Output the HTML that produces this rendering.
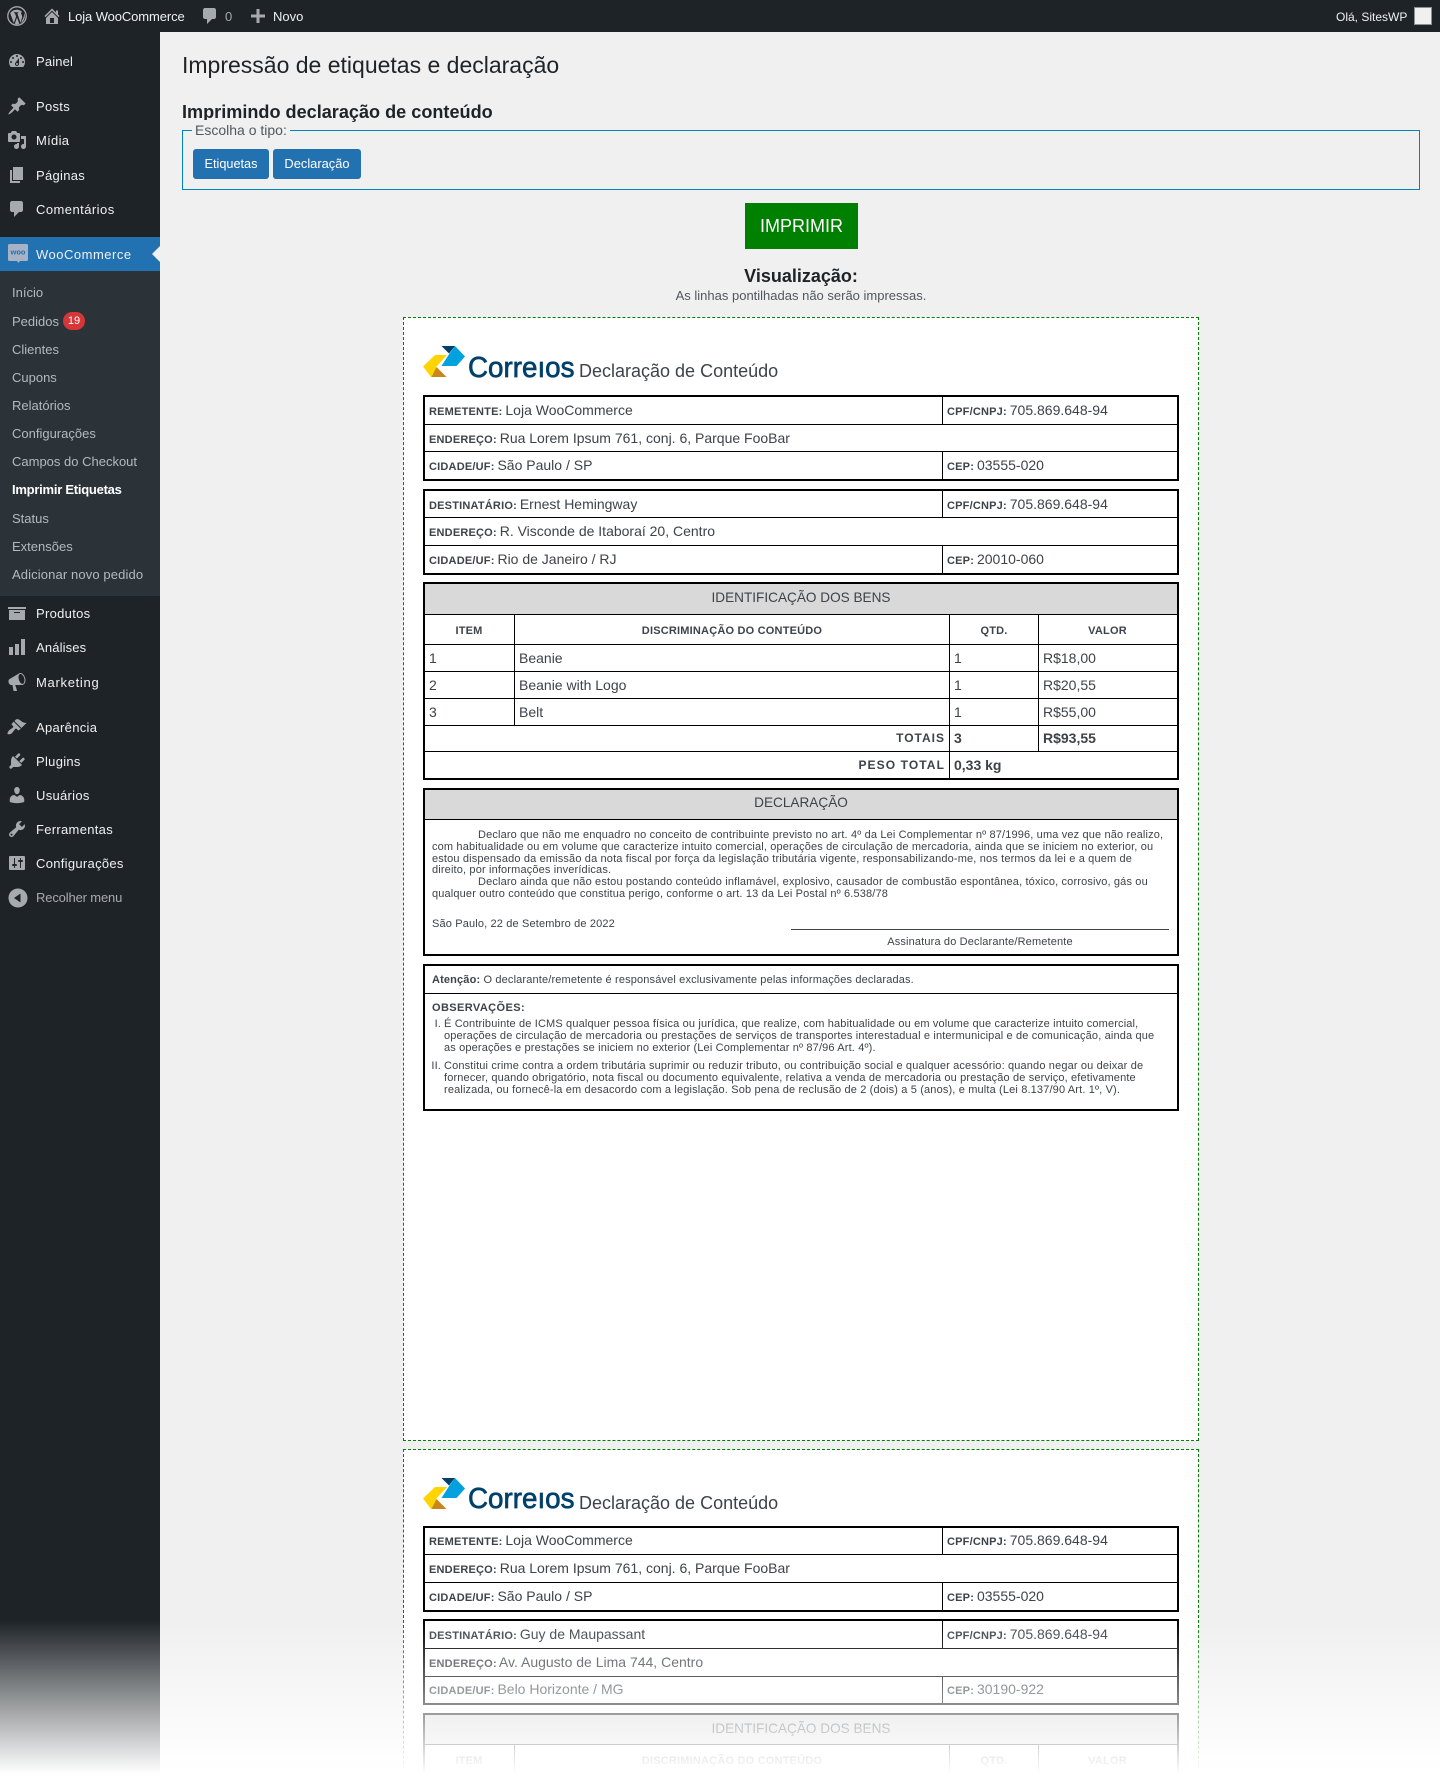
<!DOCTYPE html>
<html lang="pt-BR"><head><meta charset="utf-8"><title>Impressão de etiquetas</title>
<style>
*{box-sizing:border-box}
html,body{margin:0;padding:0;width:1440px;height:1780px;overflow:hidden}
body{background:#f0f0f1;font-family:"Liberation Sans",sans-serif;color:#3c434a}
#w{position:absolute;left:0;top:0;width:1440px;height:1780px;overflow:hidden;background:#f0f0f1}
.a{position:absolute}
.t{position:absolute;white-space:nowrap;line-height:20px;font-size:14px;color:#3c434a}
.c{transform:translateX(-50%)}
.r{transform:translateX(-100%)}
b.k{font-size:11px;letter-spacing:.2px;margin-right:-1px}
.m{position:absolute;left:36px;margin-top:1px;white-space:nowrap;line-height:20px;font-size:13px;letter-spacing:.3px;color:#f0f0f1}
.s{position:absolute;left:12px;margin-top:1px;white-space:nowrap;line-height:20px;font-size:13px;letter-spacing:0;color:#b4b9be}
svg.i{position:absolute;left:7px;width:20px;height:20px;fill:#a7aaad}
.bx{position:absolute;left:423px;width:756px;border:2px solid #000}
.h{position:absolute;height:1px;background:#000}
.v{position:absolute;width:1px;background:#000}
.g{position:absolute;background:#d9d9d9}
.d{position:absolute;margin-top:1px;white-space:nowrap;font-size:11px;line-height:12px;color:#3c434a;letter-spacing:.15px}
.pg{position:absolute;left:403px;width:796px;background:#fff;border:1px dashed #008000}
.hd{font-size:18px;color:#3c434a}
.th{font-size:11px;font-weight:bold;letter-spacing:.2px;margin-top:1px}
.ti{font-size:13.6px}
</style></head><body><div id="w">

<!-- admin bar -->
<div class="a" style="left:0;top:0;width:1440px;height:32px;background:#1d2327"></div>
<svg class="a" style="left:7px;top:6px;width:20px;height:20px" viewBox="0 0 20 20"><circle cx="10" cy="10" r="9.2" fill="none" stroke="#a7aaad" stroke-width="1.3"/><path fill="#a7aaad" d="M3.2 7.2l3.6 9.9 2.3-6.6-1.2-3.2-1-.1v-.9h4.4v.9l-1 .1 3.2 9.4 1.5-5c.5-1.700-.3-2.800-.8-3.700-.5-.9.1-1.900 1-2A7.700 7.700 0 0 0 3.200 7.200zM10 11.500l-2.300 6.600a8 8 0 0 0 4.700-.1zM16.900 6.500c.6 2.600-.1 4-.6 5.500l-2.400 5A7.900 7.900 0 0 0 16.900 6.500z"/></svg>
<svg class="a" style="left:42px;top:6px;width:20px;height:20px;fill:#a7aaad" viewBox="0 0 20 20"><path d="M16 8.500l1.530 1.530-1.060 1.060L10 4.620l-6.470 6.470-1.060-1.060L10 2.500l4 4v-2h2v4zm-6-2.460l6 5.990V18H4v-5.970zM12 17v-5H8v5h4z"/></svg>
<div class="t" style="left:68px;top:7px;font-size:13px;color:#f0f0f1;letter-spacing:-.1px">Loja WooCommerce</div>
<svg class="a" style="left:200px;top:6px;width:20px;height:20px;fill:#a7aaad" viewBox="0 0 20 20"><path d="M5 2h9c1.100 0 2 .9 2 2v7c0 1.100-.9 2-2 2h-2l-5 5v-5H5c-1.100 0-2-.9-2-2V4c0-1.100.9-2 2-2z"/></svg>
<div class="t" style="left:225px;top:7px;font-size:13px;color:#a7aaad">0</div>
<svg class="a" style="left:248px;top:6px;width:20px;height:20px;fill:#a7aaad" viewBox="0 0 20 20"><path d="M17 8.500v3h-5.500V17h-3v-5.500H3v-3h5.500V3h3v5.500z"/></svg>
<div class="t" style="left:273px;top:7px;font-size:13px;color:#f0f0f1">Novo</div>
<div class="t" style="left:1336px;top:7px;font-size:12px;color:#f0f0f1">Olá, SitesWP</div>
<div class="a" style="left:1414px;top:7px;width:18px;height:18px;background:#f0f0f1;border:1px solid #8c8f94"></div>

<!-- sidebar -->
<div class="a" style="left:0;top:32px;width:160px;height:1748px;background:#1d2327"></div>
<div class="a" style="left:0;top:271px;width:160px;height:325px;background:#2c3338"></div>
<div class="a" style="left:0;top:237px;width:160px;height:34px;background:#2271b1"></div>
<div class="a" style="left:152px;top:246px;width:0;height:0;border:8px solid transparent;border-right-color:#f0f0f1;border-left:0"></div>

<svg class="i" style="top:51px" viewBox="0 0 20 20"><path d="M3.760 16h12.480c1.100-1.370 1.760-3.110 1.760-5 0-4.420-3.580-8-8-8s-8 3.580-8 8c0 1.890.66 3.630 1.760 5zM10 4c.55 0 1 .45 1 1s-.45 1-1 1-1-.45-1-1 .45-1 1-1zM6 6c.55 0 1 .45 1 1s-.45 1-1 1-1-.45-1-1 .45-1 1-1zm8 0c.55 0 1 .45 1 1s-.45 1-1 1-1-.45-1-1 .45-1 1-1zm-5.370 5.550L12 7v6c0 1.100-.9 2-2 2s-2-.9-2-2c0-.57.24-1.080.63-1.450zM4 10c.55 0 1 .45 1 1s-.45 1-1 1-1-.45-1-1 .45-1 1-1zm12 0c.55 0 1 .45 1 1s-.45 1-1 1-1-.45-1-1 .45-1 1-1zm-5 3c0-.55-.45-1-1-1s-1 .45-1 1 .45 1 1 1 1-.45 1-1z" fill-rule="evenodd"/></svg>
<div class="m" style="top:51px;letter-spacing:.15px">Painel</div>
<svg class="i" style="top:96px" viewBox="0 0 20 20"><path d="M10.440 3.020l1.820-1.820 6.360 6.350-1.830 1.820c-1.050-.68-2.480-.57-3.410.36l-.75.75c-.92.93-1.040 2.350-.35 3.410l-1.830 1.820-2.410-2.410-2.800 2.790c-.42.42-3.380 2.710-3.800 2.290s1.860-3.390 2.280-3.810l2.790-2.790L4.100 9.360l1.830-1.820c1.050.69 2.480.57 3.400-.36l.75-.75c.93-.92 1.050-2.350.36-3.410z"/></svg>
<div class="m" style="top:96px">Posts</div>
<svg class="i" style="top:130px" viewBox="0 0 20 20"><path fill-rule="evenodd" d="M13 11V4c0-.55-.45-1-1-1h-1.670L9 1H5L3.670 3H2c-.55 0-1 .45-1 1v7c0 .55.45 1 1 1h10c.55 0 1-.45 1-1zM7 4.500c1.380 0 2.500 1.120 2.500 2.500S8.380 9.500 7 9.500 4.500 8.380 4.500 7 5.620 4.500 7 4.500zM14 6h5v10.500c0 1.380-1.120 2.500-2.500 2.500S14 17.880 14 16.500s1.120-2.500 2.500-2.500c.17 0 .34.02.5.05V9h-3V6zm-4 8.050V13h2v3.500c0 1.380-1.120 2.500-2.500 2.500S7 17.880 7 16.500 8.120 14 9.500 14c.17 0 .34.02.5.05z"/></svg>
<div class="m" style="top:130px">Mídia</div>
<svg class="i" style="top:165px" viewBox="0 0 20 20"><path d="M6 15V2h10v13H6zm-1 1h8v2H3V5h2v11z"/></svg>
<div class="m" style="top:165px">Páginas</div>
<svg class="i" style="top:199px" viewBox="0 0 20 20"><path d="M5 2h9c1.100 0 2 .9 2 2v7c0 1.100-.9 2-2 2h-2l-5 5v-5H5c-1.100 0-2-.9-2-2V4c0-1.100.9-2 2-2z"/></svg>
<div class="m" style="top:199px;letter-spacing:.45px">Comentários</div>
<svg class="a" style="left:8px;top:244px;width:20px;height:20px" viewBox="0 0 20 20"><path fill="#a7b3c4" d="M1.500 0h17A1.500 1.500 0 0 1 20 1.500v14a1.500 1.500 0 0 1-1.500 1.500H12l-1.500 2-1.500-2H1.500A1.500 1.500 0 0 1 0 15.500v-14A1.500 1.500 0 0 1 1.500 0z"/><text x="10" y="10.500" text-anchor="middle" font-size="7.500" font-weight="bold" fill="#2271b1" font-family="Liberation Sans,sans-serif">woo</text></svg>
<div class="m" style="top:244px;letter-spacing:.5px">WooCommerce</div>

<div class="s" style="top:282px">Início</div>
<div class="s" style="top:311px">Pedidos</div>
<div class="a" style="left:63px;top:312px;width:22px;height:18px;border-radius:9px;background:#d63638;color:#fff;font-size:11px;line-height:18px;text-align:center">19</div>
<div class="s" style="top:339px">Clientes</div>
<div class="s" style="top:367px">Cupons</div>
<div class="s" style="top:395px">Relatórios</div>
<div class="s" style="top:423px">Configurações</div>
<div class="s" style="top:451px">Campos do Checkout</div>
<div class="s" style="top:479px;color:#fff;font-weight:bold;letter-spacing:-.25px">Imprimir Etiquetas</div>
<div class="s" style="top:508px">Status</div>
<div class="s" style="top:536px">Extensões</div>
<div class="s" style="top:564px;letter-spacing:.12px">Adicionar novo pedido</div>

<svg class="i" style="top:603px" viewBox="0 0 20 20"><path fill-rule="evenodd" d="M19 4v2H1V4h18zM2 7h16v10H2V7zm11 3V9H7v1h6z"/></svg>
<div class="m" style="top:603px">Produtos</div>
<svg class="i" style="top:637px" viewBox="0 0 20 20"><path d="M18 18V2h-4v16h4zm-6 0V7H8v11h4zm-6 0v-8H2v8h4z"/></svg>
<div class="m" style="top:637px;letter-spacing:.15px">Análises</div>
<svg class="i" style="top:672px" viewBox="0 0 20 20"><path fill-rule="evenodd" d="M18.150 5.940c.46 1.620.38 3.220-.02 4.480-.42 1.280-1.260 2.180-2.300 2.480-.4.12-.6.1-.8.1H8.200l1.800 5.500c.02.14-.06.26-.14.34-.08.1-.24.16-.34.16H6.950c-.1 0-.26-.06-.34-.16-.08-.08-.16-.2-.14-.34l-1-5.500H4.250c-.5.06-1.080-.18-1.540-.62s-.88-1.080-1.060-1.880c-.24-.8-.2-1.560-.02-2.200.18-.62.58-1.080 1.060-1.300l9-5.400c.34-.22.6-.36 1-.46 1.040-.3 2.240.1 3.220.98.98.88 1.800 2.240 2.260 3.860zM15.570 11.920c.4-.1.740-.34 1.040-.7.58-.7.860-1.760.860-3.040 0-.64-.1-1.300-.28-1.980-.34-1.360-1.020-2.500-1.780-3.240-.76-.76-1.500-1.100-2.300-.9-.78.22-1.320 1-1.520 2.120-.14.62-.14 1.340-.02 2.080.4 2.800 2.200 5.800 4 5.660z"/></svg>
<div class="m" style="top:672px;letter-spacing:.7px">Marketing</div>
<svg class="i" style="top:717px" viewBox="0 0 20 20"><path d="M14.480 11.060L7.410 3.990l1.500-1.500c.5-.56 2.300-.47 3.510.32 1.210.8 1.430 1.280 2.910 2.100 1.180.64 2.450 1.260 4.450.85zm-.71.71L6.700 4.700 4.930 6.470c-.39.39-.39 1.020 0 1.410l1.060 1.060c.39.39.39 1.030 0 1.420-.6.6-1.430 1.110-2.210 1.690-.35.26-.7.53-1.010.84C1.430 13.230.25 16.500.5 17c.3.500 3 .5 4.300-.8.66-.66 1.220-1.380 1.750-2.090.57-.77 1.110-1.520 1.730-2.140.39-.39 1.020-.39 1.410 0l1.060 1.060c.39.39 1.020.39 1.410 0z"/></svg>
<div class="m" style="top:717px">Aparência</div>
<svg class="i" style="top:751px" viewBox="0 0 20 20"><path d="M13.110 4.360L9.870 7.600 8 5.730l3.240-3.240c.35-.34 1.050-.2 1.560.32.52.51.66 1.210.31 1.550zm-8 1.770l.91-1.120 9.010 9.010-1.190.84c-.71.71-2.630 1.160-3.820 1.160H6.140L4.900 17.260c-.59.59-1.540.59-2.120 0-.59-.58-.59-1.530 0-2.120l1.240-1.240v-3.880c0-1.130.4-3.190 1.090-3.890zm7.260 3.970l3.240-3.240c.34-.35 1.040-.21 1.550.31.52.51.66 1.210.31 1.550l-3.240 3.250z"/></svg>
<div class="m" style="top:751px">Plugins</div>
<svg class="i" style="top:785px" viewBox="0 0 20 20"><path d="M10 9.250c-2.270 0-2.730-3.440-2.730-3.440C7 4.020 7.820 2 9.970 2c2.160 0 2.980 2.020 2.710 3.810 0 0-.41 3.440-2.680 3.440zm0 2.570L12.720 10c2.390 0 4.520 2.330 4.520 4.530v2.490s-3.650 1.130-7.240 1.130c-3.650 0-7.240-1.130-7.240-1.130v-2.490c0-2.250 1.940-4.480 4.470-4.480z"/></svg>
<div class="m" style="top:785px">Usuários</div>
<svg class="i" style="top:819px" viewBox="0 0 20 20"><path fill-rule="evenodd" d="M16.680 9.770c-1.340 1.340-3.300 1.670-4.950.99l-5.410 6.520c-.99.99-2.590.99-3.580 0s-.99-2.590 0-3.570l6.520-5.420c-.68-1.650-.35-3.610.99-4.950 1.280-1.280 3.120-1.620 4.720-1.060l-2.890 2.890 2.820 2.820 2.860-2.870c.53 1.580.18 3.390-1.080 4.650zM3.810 16.210c.4.39 1.040.39 1.430 0 .4-.4.4-1.040 0-1.430-.39-.4-1.030-.4-1.430 0-.39.39-.39 1.030 0 1.430z"/></svg>
<div class="m" style="top:819px">Ferramentas</div>
<svg class="i" style="top:853px" viewBox="0 0 20 20"><path fill-rule="evenodd" d="M18 16V4c0-.55-.45-1-1-1H3c-.55 0-1 .45-1 1v12c0 .55.45 1 1 1h14c.55 0 1-.45 1-1zM8 11h1c.55 0 1 .45 1 1s-.45 1-1 1H8v1.500c0 .28-.22.5-.5.5s-.5-.22-.5-.5V13H6c-.55 0-1-.45-1-1s.45-1 1-1h1V5.500c0-.28.22-.5.5-.5s.5.22.5.5V11zm5-2h-1c-.55 0-1-.45-1-1s.45-1 1-1h1V5.500c0-.28.22-.5.5-.5s.5.22.5.5V7h1c.55 0 1 .45 1 1s-.45 1-1 1h-1v5.500c0 .28-.22.5-.5.5s-.5-.22-.5-.5V9z"/></svg>
<div class="m" style="top:853px">Configurações</div>
<svg class="i" style="top:888px;left:8px" viewBox="0 0 20 20"><path fill-rule="evenodd" d="M10 .5c5.250 0 9.500 4.250 9.500 9.500s-4.250 9.500-9.500 9.500S.5 15.250.5 10 4.750.5 10 .5zM12.500 5.500L6 10l6.500 4.500z"/></svg>
<div class="m" style="top:887px;color:#a7aaad;letter-spacing:-.15px">Recolher menu</div>

<!-- content head -->
<div class="t" style="left:182px;top:53px;line-height:24px;font-size:23px;color:#1d2327">Impressão de etiquetas e declaração</div>
<div class="t" style="left:182px;top:102px;line-height:20px;font-size:18.1px;font-weight:bold;color:#1d2327">Imprimindo declaração de conteúdo</div>
<div class="a" style="left:182px;top:130px;width:1238px;height:60px;border:1px solid #0085ba"></div>
<div class="t" style="left:192px;top:120px;padding:0 3px;background:#f0f0f1;font-size:14px;color:#50575e">Escolha o tipo:</div>
<div class="a" style="left:193px;top:149px;width:76px;height:30px;background:#2271b1;border-radius:3px;color:#fff;font-size:12.7px;line-height:30px;text-align:center">Etiquetas</div>
<div class="a" style="left:273px;top:149px;width:88px;height:30px;background:#2271b1;border-radius:3px;color:#fff;font-size:12.9px;line-height:30px;text-align:center">Declaração</div>
<div class="a" style="left:745px;top:203px;width:113px;height:46px;background:#008000;color:#fff;font-size:18px;line-height:46px;text-align:center">IMPRIMIR</div>
<div class="t c" style="left:801px;top:266px;font-size:18px;font-weight:bold;color:#1d2327">Visualização:</div>
<div class="t c" style="left:801px;top:286px;font-size:13px;color:#50575e">As linhas pontilhadas não serão impressas.</div>

<!-- PAGE 1 -->
<div class="pg" style="top:317px;height:1124px"></div>
<svg class="a" style="left:420px;top:340px;width:60px;height:40px" viewBox="420 340 60 40"><path fill="#00416b" d="M441.500 346H455l-6 7.500z"/><path fill="#00a1de" d="M455 346l10 10.500-8.500 9.500h-15l8-12.500z"/><path fill="#ffd400" d="M423 366.500l12-11.500h12l-11 12 .5 10h-5.500z"/><path fill="#c8861c" d="M436.500 367l10 10h-15z"/></svg>
<svg class="a" style="left:460px;top:345px;width:120px;height:40px" viewBox="460 345 120 40"><text x="468" y="377" font-size="29" textLength="106.500" lengthAdjust="spacingAndGlyphs" fill="#00416b" stroke="#00416b" stroke-width=".7" font-family="Liberation Sans,sans-serif">Correıos</text></svg>
<div class="t hd" style="left:579px;top:361px">Declaração de Conteúdo</div>

<div class="bx" style="top:395px;height:86px"></div>
<div class="h" style="left:425px;width:752px;top:424px"></div>
<div class="h" style="left:425px;width:752px;top:451px"></div>
<div class="v" style="left:942px;top:397px;height:27px"></div>
<div class="v" style="left:942px;top:451px;height:28px"></div>
<div class="t" style="left:429px;top:400px"><b class="k">REMETENTE:</b> Loja WooCommerce</div>
<div class="t" style="left:947px;top:400px"><b class="k">CPF/CNPJ:</b> 705.869.648-94</div>
<div class="t" style="left:429px;top:428px"><b class="k">ENDEREÇO:</b> Rua Lorem Ipsum 761, conj. 6, Parque FooBar</div>
<div class="t" style="left:429px;top:455px"><b class="k">CIDADE/UF:</b> São Paulo / SP</div>
<div class="t" style="left:947px;top:455px"><b class="k">CEP:</b> 03555-020</div>

<div class="bx" style="top:489px;height:86px"></div>
<div class="h" style="left:425px;width:752px;top:517px"></div>
<div class="h" style="left:425px;width:752px;top:545px"></div>
<div class="v" style="left:942px;top:491px;height:26px"></div>
<div class="v" style="left:942px;top:545px;height:28px"></div>
<div class="t" style="left:429px;top:494px"><b class="k">DESTINATÁRIO:</b> Ernest Hemingway</div>
<div class="t" style="left:947px;top:494px"><b class="k">CPF/CNPJ:</b> 705.869.648-94</div>
<div class="t" style="left:429px;top:521px"><b class="k">ENDEREÇO:</b> R. Visconde de Itaboraí 20, Centro</div>
<div class="t" style="left:429px;top:549px"><b class="k">CIDADE/UF:</b> Rio de Janeiro / RJ</div>
<div class="t" style="left:947px;top:549px"><b class="k">CEP:</b> 20010-060</div>

<div class="g" style="left:425px;top:584px;width:752px;height:30px"></div>
<div class="bx" style="top:582px;height:198px"></div>
<div class="h" style="left:425px;width:752px;top:614px"></div>
<div class="h" style="left:425px;width:752px;top:644px"></div>
<div class="h" style="left:425px;width:752px;top:671px"></div>
<div class="h" style="left:425px;width:752px;top:698px"></div>
<div class="h" style="left:425px;width:752px;top:725px"></div>
<div class="h" style="left:425px;width:752px;top:751px"></div>
<div class="v" style="left:514px;top:614px;height:111px"></div>
<div class="v" style="left:949px;top:614px;height:164px"></div>
<div class="v" style="left:1038px;top:614px;height:137px"></div>
<div class="t c ti" style="left:801px;top:588px">IDENTIFICAÇÃO DOS BENS</div>
<div class="t c th" style="left:469px;top:620px">ITEM</div>
<div class="t c th" style="left:732px;top:620px">DISCRIMINAÇÃO DO CONTEÚDO</div>
<div class="t c th" style="left:994px;top:620px">QTD.</div>
<div class="t c th" style="left:1107.500px;top:620px">VALOR</div>
<div class="t" style="left:429px;top:648px">1</div><div class="t" style="left:519px;top:648px">Beanie</div><div class="t" style="left:954px;top:648px">1</div><div class="t" style="left:1043px;top:648px">R$18,00</div>
<div class="t" style="left:429px;top:675px">2</div><div class="t" style="left:519px;top:675px">Beanie with Logo</div><div class="t" style="left:954px;top:675px">1</div><div class="t" style="left:1043px;top:675px">R$20,55</div>
<div class="t" style="left:429px;top:702px">3</div><div class="t" style="left:519px;top:702px">Belt</div><div class="t" style="left:954px;top:702px">1</div><div class="t" style="left:1043px;top:702px">R$55,00</div>
<div class="t r" style="left:945px;top:728px;font-size:12px;font-weight:bold;letter-spacing:1px">TOTAIS</div><div class="t" style="left:954px;top:728px;font-weight:bold">3</div><div class="t" style="left:1043px;top:728px;font-weight:bold">R$93,55</div>
<div class="t r" style="left:945px;top:755px;font-size:12px;font-weight:bold;letter-spacing:1.1px">PESO TOTAL</div><div class="t" style="left:954px;top:755px;font-weight:bold">0,33 kg</div>

<div class="g" style="left:425px;top:790px;width:752px;height:29px"></div>
<div class="bx" style="top:788px;height:168px"></div>
<div class="h" style="left:425px;width:752px;top:819px"></div>
<div class="t c ti" style="left:801px;top:793px">DECLARAÇÃO</div>
<div class="d" style="left:478px;top:828px">Declaro que não me enquadro no conceito de contribuinte previsto no art. 4º da Lei Complementar nº 87/1996, uma vez que não realizo,</div>
<div class="d" style="left:432px;top:840px">com habitualidade ou em volume que caracterize intuito comercial, operações de circulação de mercadoria, ainda que se iniciem no exterior, ou</div>
<div class="d" style="left:432px;top:852px">estou dispensado da emissão da nota fiscal por força da legislação tributária vigente, responsabilizando-me, nos termos da lei e a quem de</div>
<div class="d" style="left:432px;top:863px">direito, por informações inverídicas.</div>
<div class="d" style="left:478px;top:875px">Declaro ainda que não estou postando conteúdo inflamável, explosivo, causador de combustão espontânea, tóxico, corrosivo, gás ou</div>
<div class="d" style="left:432px;top:887px">qualquer outro conteúdo que constitua perigo, conforme o art. 13 da Lei Postal nº 6.538/78</div>
<div class="d" style="left:432px;top:917px">São Paulo, 22 de Setembro de 2022</div>
<div class="h" style="left:791px;width:378px;top:929px;background:#3c434a"></div>
<div class="d c" style="left:980px;top:935px">Assinatura do Declarante/Remetente</div>

<div class="bx" style="top:964px;height:147px"></div>
<div class="h" style="left:425px;width:752px;top:993px"></div>
<div class="d" style="left:432px;top:973px"><b>Atenção:</b> O declarante/remetente é responsável exclusivamente pelas informações declaradas.</div>
<div class="d" style="left:432px;top:1001px;font-weight:bold;letter-spacing:.4px">OBSERVAÇÕES:</div>
<div class="d r" style="left:441px;top:1017px">I.</div>
<div class="d" style="left:444px;top:1017px">É Contribuinte de ICMS qualquer pessoa física ou jurídica, que realize, com habitualidade ou em volume que caracterize intuito comercial,</div>
<div class="d" style="left:444px;top:1029px">operações de circulação de mercadoria ou prestações de serviços de transportes interestadual e intermunicipal e de comunicação, ainda que</div>
<div class="d" style="left:444px;top:1041px">as operações e prestações se iniciem no exterior (Lei Complementar nº 87/96 Art. 4º).</div>
<div class="d r" style="left:441px;top:1059px">II.</div>
<div class="d" style="left:444px;top:1059px">Constitui crime contra a ordem tributária suprimir ou reduzir tributo, ou contribuição social e qualquer acessório: quando negar ou deixar de</div>
<div class="d" style="left:444px;top:1071px">fornecer, quando obrigatório, nota fiscal ou documento equivalente, relativa a venda de mercadoria ou prestação de serviço, efetivamente</div>
<div class="d" style="left:444px;top:1083px">realizada, ou fornecê-la em desacordo com a legislação. Sob pena de reclusão de 2 (dois) a 5 (anos), e multa (Lei 8.137/90 Art. 1º, V).</div>

<!-- PAGE 2 -->
<div class="pg" style="top:1449px;height:340px"></div>
<svg class="a" style="left:420px;top:1472px;width:60px;height:40px" viewBox="420 340 60 40"><path fill="#00416b" d="M441.500 346H455l-6 7.500z"/><path fill="#00a1de" d="M455 346l10 10.500-8.500 9.500h-15l8-12.500z"/><path fill="#ffd400" d="M423 366.500l12-11.500h12l-11 12 .5 10h-5.500z"/><path fill="#c8861c" d="M436.500 367l10 10h-15z"/></svg>
<svg class="a" style="left:460px;top:1476px;width:120px;height:40px" viewBox="460 345 120 40"><text x="468" y="377" font-size="29" textLength="106.500" lengthAdjust="spacingAndGlyphs" fill="#00416b" stroke="#00416b" stroke-width=".7" font-family="Liberation Sans,sans-serif">Correıos</text></svg>
<div class="t hd" style="left:579px;top:1493px">Declaração de Conteúdo</div>

<div class="bx" style="top:1526px;height:86px"></div>
<div class="h" style="left:425px;width:752px;top:1554px"></div>
<div class="h" style="left:425px;width:752px;top:1582px"></div>
<div class="v" style="left:942px;top:1528px;height:26px"></div>
<div class="v" style="left:942px;top:1582px;height:28px"></div>
<div class="t" style="left:429px;top:1530px"><b class="k">REMETENTE:</b> Loja WooCommerce</div>
<div class="t" style="left:947px;top:1530px"><b class="k">CPF/CNPJ:</b> 705.869.648-94</div>
<div class="t" style="left:429px;top:1558px"><b class="k">ENDEREÇO:</b> Rua Lorem Ipsum 761, conj. 6, Parque FooBar</div>
<div class="t" style="left:429px;top:1586px"><b class="k">CIDADE/UF:</b> São Paulo / SP</div>
<div class="t" style="left:947px;top:1586px"><b class="k">CEP:</b> 03555-020</div>

<div class="bx" style="top:1619px;height:86px"></div>
<div class="h" style="left:425px;width:752px;top:1648px"></div>
<div class="h" style="left:425px;width:752px;top:1676px"></div>
<div class="v" style="left:942px;top:1621px;height:27px"></div>
<div class="v" style="left:942px;top:1676px;height:27px"></div>
<div class="t" style="left:429px;top:1624px"><b class="k">DESTINATÁRIO:</b> Guy de Maupassant</div>
<div class="t" style="left:947px;top:1624px"><b class="k">CPF/CNPJ:</b> 705.869.648-94</div>
<div class="t" style="left:429px;top:1652px"><b class="k">ENDEREÇO:</b> Av. Augusto de Lima 744, Centro</div>
<div class="t" style="left:429px;top:1679px"><b class="k">CIDADE/UF:</b> Belo Horizonte / MG</div>
<div class="t" style="left:947px;top:1679px"><b class="k">CEP:</b> 30190-922</div>

<div class="g" style="left:425px;top:1715px;width:752px;height:29px"></div>
<div class="bx" style="top:1713px;height:67px;border-bottom:0"></div>
<div class="h" style="left:425px;width:752px;top:1744px"></div>
<div class="h" style="left:425px;width:752px;top:1775px"></div>
<div class="v" style="left:514px;top:1744px;height:36px"></div>
<div class="v" style="left:949px;top:1744px;height:36px"></div>
<div class="v" style="left:1038px;top:1744px;height:36px"></div>
<div class="t c ti" style="left:801px;top:1719px">IDENTIFICAÇÃO DOS BENS</div>
<div class="t c th" style="left:469px;top:1750px">ITEM</div>
<div class="t c th" style="left:732px;top:1750px">DISCRIMINAÇÃO DO CONTEÚDO</div>
<div class="t c th" style="left:994px;top:1750px">QTD.</div>
<div class="t c th" style="left:1107.500px;top:1750px">VALOR</div>

<!-- bottom fade -->
<div class="a" style="left:0;top:1620px;width:1440px;height:160px;background:linear-gradient(to bottom,rgba(255,255,255,0),rgba(255,255,255,1) 96%)"></div>
</div></body></html>
